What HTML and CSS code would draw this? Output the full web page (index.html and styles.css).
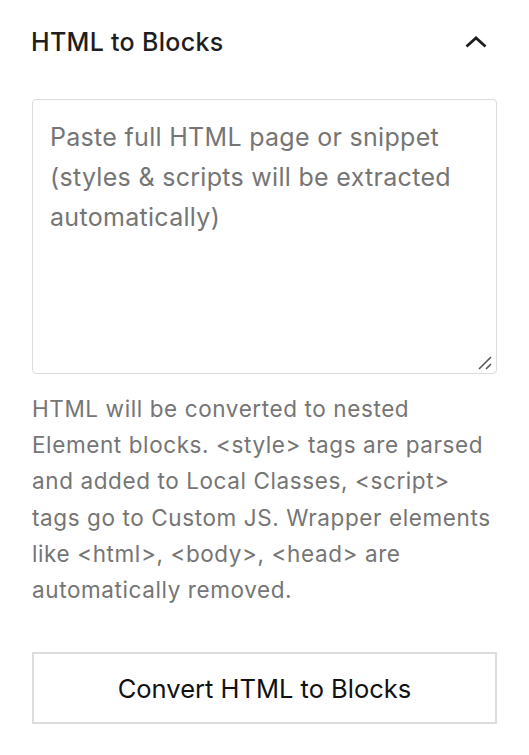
FILE: index.html
```html
<!DOCTYPE html>
<html lang="en">
<head>
<meta charset="utf-8">
<title>HTML to Blocks</title>
<link rel="stylesheet" href="styles.css">
</head>
<body>
<section class="panel">
  <header class="panel-header">
    <h2 class="panel-title">HTML to Blocks</h2>
    <button class="toggle" type="button" aria-label="Collapse">
      <svg class="chevron" viewBox="0 0 24 16" width="24" height="16" aria-hidden="true">
        <polyline points="2.5,12.5 12,4 21.5,12.5" fill="none" stroke="#1e1e1e" stroke-width="2.8" stroke-linecap="butt" stroke-linejoin="miter"/>
      </svg>
    </button>
  </header>
  <div class="panel-body">
    <div class="field">
      <textarea class="html-input" placeholder="Paste full HTML page or snippet (styles &amp; scripts will be extracted automatically)"></textarea>
      <svg class="grip" viewBox="0 0 16 16" width="16" height="16" aria-hidden="true">
        <line x1="2" y1="14" x2="14" y2="2" stroke="#555" stroke-width="1.6"/>
        <line x1="9" y1="14" x2="14" y2="9" stroke="#555" stroke-width="1.6"/>
      </svg>
    </div>
    <p class="help">HTML will be converted to nested Element blocks. &lt;style&gt; tags are parsed and added to Local Classes, &lt;script&gt; tags go to Custom JS. Wrapper elements like &lt;html&gt;, &lt;body&gt;, &lt;head&gt; are automatically removed.</p>
    <button class="convert" type="button">Convert HTML to Blocks</button>
  </div>
</section>
</body>
</html>
```
FILE: styles.css
```css
html, body {
  margin: 0;
  padding: 0;
  background: #ffffff;
}
body {
  font-family: "Inter", "Noto Sans", "Liberation Sans", sans-serif;
  color: #1e1e1e;
}
.panel {
  padding: 0 32px 0 32px;
}
.panel-header {
  display: flex;
  align-items: center;
  justify-content: space-between;
  height: 84px;
}
.panel-title {
  margin: 0 0 0 -1px;
  font-size: 25px;
  font-weight: 500;
  color: #1e1e1e;
  letter-spacing: 0.3px;
}
.toggle {
  border: 0;
  background: transparent;
  padding: 0;
  margin-right: 9px;
  display: flex;
  align-items: center;
}
.chevron {
  display: block;
}
.panel-body {
  display: flex;
  flex-direction: column;
  padding-top: 15px;
}
.field {
  position: relative;
  display: flex;
}
.html-input {
  flex: 1;
  box-sizing: border-box;
  height: 275px;
  margin: 0;
  padding: 17px 17px;
  border: 1.5px solid #dcdcdc;
  border-radius: 4px;
  resize: none;
  font-family: "Inter", "Noto Sans", "Liberation Sans", sans-serif;
  font-size: 25px;
  letter-spacing: 0.3px;
  line-height: 40px;
  color: #1e1e1e;
  background: #fff;
}
.html-input::placeholder {
  color: #757575;
  opacity: 1;
}
.grip {
  position: absolute;
  right: 4px;
  bottom: 3px;
}
.help {
  margin: 17px 0 0 0;
  font-size: 22.5px;
  letter-spacing: 0.6px;
  line-height: 36.2px;
  color: #757575;
}
.convert {
  margin-top: 44px;
  height: 72px;
  box-sizing: border-box;
  border: 2px solid #dddddd;
  background: #ffffff;
  font-family: "Inter", "Noto Sans", "Liberation Sans", sans-serif;
  font-size: 25.5px;
  color: #111111;
  padding: 0;
}
```
